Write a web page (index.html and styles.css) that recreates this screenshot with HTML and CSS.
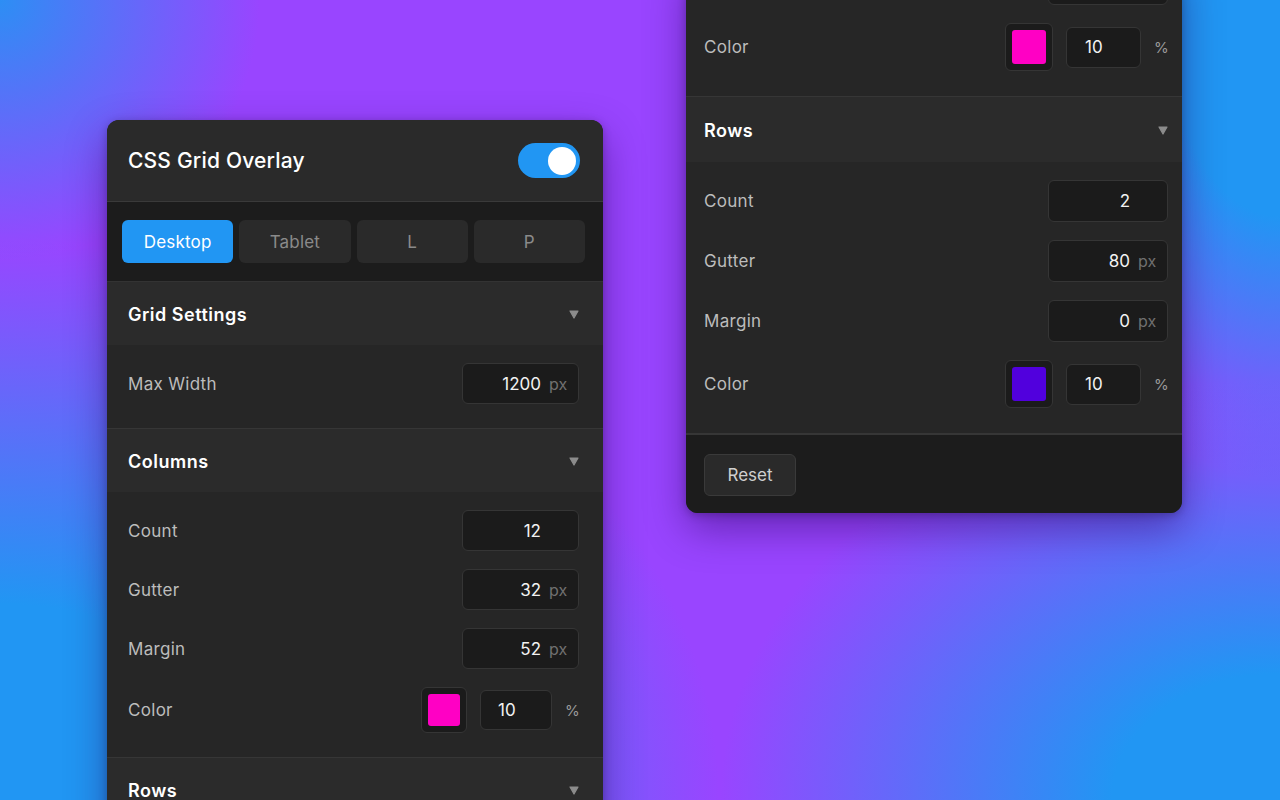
FILE: index.html
```html
<!DOCTYPE html>
<html lang="en">
<head>
<meta charset="utf-8">
<title>CSS Grid Overlay</title>
<link rel="stylesheet" href="styles.css">
</head>
<body>
<div class="canvas">
  <section class="panel panel--main">
    <header class="panel-head">
      <h1 class="panel-title">CSS Grid Overlay</h1>
      <span class="toggle"><span class="toggle-knob"></span></span>
    </header>
    <nav class="tabs">
      <button class="tab tab--active">Desktop</button>
      <button class="tab">Tablet</button>
      <button class="tab">L</button>
      <button class="tab">P</button>
    </nav>

    <div class="section">
      <div class="section-head">
        <span class="section-title">Grid Settings</span>
        <svg class="caret" width="10" height="9" viewBox="0 0 10 9"><polygon points="1,1 9,1 5,8"/></svg>
      </div>
      <div class="section-body">
        <div class="row">
          <span class="label">Max Width</span>
          <span class="field"><span class="num">1200</span><span class="unit">px</span></span>
        </div>
      </div>
    </div>

    <div class="section">
      <div class="section-head">
        <span class="section-title">Columns</span>
        <svg class="caret" width="10" height="9" viewBox="0 0 10 9"><polygon points="1,1 9,1 5,8"/></svg>
      </div>
      <div class="section-body">
        <div class="row">
          <span class="label">Count</span>
          <span class="field"><span class="num">12</span><span class="unit"></span></span>
        </div>
        <div class="row">
          <span class="label">Gutter</span>
          <span class="field"><span class="num">32</span><span class="unit">px</span></span>
        </div>
        <div class="row">
          <span class="label">Margin</span>
          <span class="field"><span class="num">52</span><span class="unit">px</span></span>
        </div>
        <div class="row">
          <span class="label">Color</span>
          <span class="color-ctrl">
            <span class="swatch"><span class="swatch-fill swatch-fill--pink"></span></span>
            <span class="pct-field">10</span>
            <span class="pct">%</span>
          </span>
        </div>
      </div>
    </div>

    <div class="section">
      <div class="section-head">
        <span class="section-title">Rows</span>
        <svg class="caret" width="10" height="9" viewBox="0 0 10 9"><polygon points="1,1 9,1 5,8"/></svg>
      </div>
      <div class="section-body">
        <div class="row">
          <span class="label">Count</span>
          <span class="field"><span class="num">2</span><span class="unit"></span></span>
        </div>
      </div>
    </div>
  </section>

  <section class="panel panel--scrolled">
    <div class="section">
      <div class="section-body section-body--tail">
        <div class="row">
          <span class="label">Margin</span>
          <span class="field"><span class="num">52</span><span class="unit">px</span></span>
        </div>
        <div class="row">
          <span class="label">Color</span>
          <span class="color-ctrl">
            <span class="swatch"><span class="swatch-fill swatch-fill--pink"></span></span>
            <span class="pct-field">10</span>
            <span class="pct">%</span>
          </span>
        </div>
      </div>
    </div>

    <div class="section">
      <div class="section-head">
        <span class="section-title">Rows</span>
        <svg class="caret" width="10" height="9" viewBox="0 0 10 9"><polygon points="1,1 9,1 5,8"/></svg>
      </div>
      <div class="section-body">
        <div class="row">
          <span class="label">Count</span>
          <span class="field"><span class="num">2</span><span class="unit"></span></span>
        </div>
        <div class="row">
          <span class="label">Gutter</span>
          <span class="field"><span class="num">80</span><span class="unit">px</span></span>
        </div>
        <div class="row">
          <span class="label">Margin</span>
          <span class="field"><span class="num">0</span><span class="unit">px</span></span>
        </div>
        <div class="row">
          <span class="label">Color</span>
          <span class="color-ctrl">
            <span class="swatch"><span class="swatch-fill swatch-fill--violet"></span></span>
            <span class="pct-field">10</span>
            <span class="pct">%</span>
          </span>
        </div>
      </div>
    </div>

    <footer class="panel-foot">
      <button class="btn-reset">Reset</button>
    </footer>
  </section>
</div>
</body>
</html>
```

FILE: styles.css
```css
* { box-sizing: border-box; }

html, body {
  margin: 0;
  padding: 0;
}

body {
  width: 1280px;
  height: 800px;
  overflow: hidden;
  font-family: Inter, "Liberation Sans", sans-serif;
  background-color: #9945ff;
  background-image:
    radial-gradient(circle 260px at 0 0, rgba(33,150,243,0.9) 0%, rgba(33,150,243,0) 100%),
    radial-gradient(ellipse 720px 560px at 0 100%, #2196f3 35%, rgba(33,150,243,0) 100%),
    radial-gradient(ellipse 560px 420px at 100% 100%, #2196f3 30%, rgba(33,150,243,0) 100%),
    radial-gradient(ellipse 260px 480px at 100% 0, #2196f3 45%, rgba(33,150,243,0) 100%);
}

.canvas {
  height: 800px;
  display: flex;
  align-items: flex-start;
  gap: 83px;
  padding-left: 107px;
  overflow: hidden;
}

.panel {
  --pl: 21px;
  --pr: 24px;
  --sh: 63px;
  --ih: 41px;
  --iw: 117px;
  --gap: 18px;
  --sw: 46px;
  --sfill: 32px;
  --pw: 72px;
  --ppad: 17px;
  --pt: 18px;
  --pb: 24px;
  width: 496px;
  flex: none;
  background: #262626;
  border-radius: 12px;
  overflow: hidden;
  box-shadow: 0 16px 40px rgba(40, 0, 90, 0.45), 0 2px 8px rgba(0, 0, 0, 0.25);
  color: #f2f2f2;
}

.panel--main {
  margin-top: 120px;
}

.panel--scrolled {
  --pl: 18px;
  --pr: 14px;
  --sh: 65px;
  --ih: 42px;
  --iw: 120px;
  --gap: 18px;
  --sw: 48px;
  --sfill: 34px;
  --pw: 75px;
  --ppad: 18px;
  --pb: 25px;
  margin-top: -37px;
  border-radius: 0 0 12px 12px;
}

.panel-head {
  height: 82px;
  display: flex;
  align-items: center;
  justify-content: space-between;
  padding: 0 23px 0 21px;
  background: #2a2a2a;
  border-bottom: 1px solid #3a3a3a;
}

.panel-title {
  margin: 0;
  font-size: 21px;
  font-weight: 500;
  letter-spacing: 0.2px;
  color: #ffffff;
}

.toggle {
  width: 62px;
  height: 35px;
  border-radius: 18px;
  background: #2196f3;
  display: flex;
  align-items: center;
  justify-content: flex-end;
  padding-right: 4px;
}

.toggle-knob {
  width: 28px;
  height: 28px;
  border-radius: 50%;
  background: #ffffff;
}

.tabs {
  display: grid;
  grid-template-columns: repeat(4, 1fr);
  gap: 6px;
  padding: 18px 18px 18px 15px;
  background: #1c1c1c;
  border-bottom: 1px solid #333333;
}

.tab {
  height: 43px;
  border: 0;
  border-radius: 6px;
  background: #2a2a2a;
  color: #8a8a8a;
  font-family: inherit;
  font-size: 17px;
  font-weight: 400;
  letter-spacing: 0.2px;
  padding: 0;
}

.tab--active {
  background: #2196f3;
  color: #ffffff;
}

.section + .section,
.section + .panel-foot {
  border-top: 1px solid #363636;
}

.section-head {
  height: var(--sh);
  display: flex;
  align-items: center;
  justify-content: space-between;
  padding: 1px var(--pr) 0 var(--pl);
  background: #2b2b2b;
}

.section-title {
  font-size: 18px;
  font-weight: 600;
  letter-spacing: 0.5px;
  color: #ffffff;
}

.caret {
  display: block;
  fill: #8c8c8c;
  stroke: #8c8c8c;
  stroke-width: 1.2;
  stroke-linejoin: round;
}

.section-body {
  display: flex;
  flex-direction: column;
  gap: var(--gap);
  padding: var(--pt) var(--pr) var(--pb) var(--pl);
  background: #262626;
}

.section-body--tail {
  padding-top: 0;
}

.row {
  display: flex;
  align-items: center;
  justify-content: space-between;
}

.label {
  font-size: 17px;
  letter-spacing: 0.3px;
  color: #bcbcbc;
}

.field {
  width: var(--iw);
  height: var(--ih);
  display: flex;
  align-items: center;
  padding-right: 12px;
  background: #1b1b1b;
  border: 1px solid #353535;
  border-radius: 6px;
}

.num {
  flex: 1;
  text-align: right;
  font-size: 17px;
  color: #f2f2f2;
}

.unit {
  width: 17px;
  margin-left: 8px;
  font-size: 16px;
  color: #707070;
}

.color-ctrl {
  display: flex;
  align-items: center;
}

.swatch {
  width: var(--sw);
  height: var(--sw);
  display: flex;
  align-items: center;
  justify-content: center;
  background: #1b1b1b;
  border: 1px solid #353535;
  border-radius: 6px;
}

.swatch-fill {
  width: var(--sfill);
  height: var(--sfill);
  border-radius: 3px;
}

.swatch-fill--pink { background: #ff00c4; }
.swatch-fill--violet { background: #5100dd; }

.pct-field {
  width: var(--pw);
  height: calc(var(--ih) - 1px);
  margin-left: 13px;
  display: flex;
  align-items: center;
  padding-left: var(--ppad);
  background: #1b1b1b;
  border: 1px solid #353535;
  border-radius: 6px;
  font-size: 17px;
  color: #f2f2f2;
}

.pct {
  width: 14px;
  margin-left: 13px;
  font-size: 15px;
  color: #9a9a9a;
}

.panel-foot {
  padding: 19px var(--pr) 17px var(--pl);
  background: #1c1c1c;
  border-top: 2px solid #363636 !important;
}

.btn-reset {
  width: 92px;
  height: 42px;
  padding: 0;
  background: #2a2a2a;
  border: 1px solid #3a3a3a;
  border-radius: 6px;
  font-family: inherit;
  font-size: 17px;
  color: #cfcfcf;
}
```
